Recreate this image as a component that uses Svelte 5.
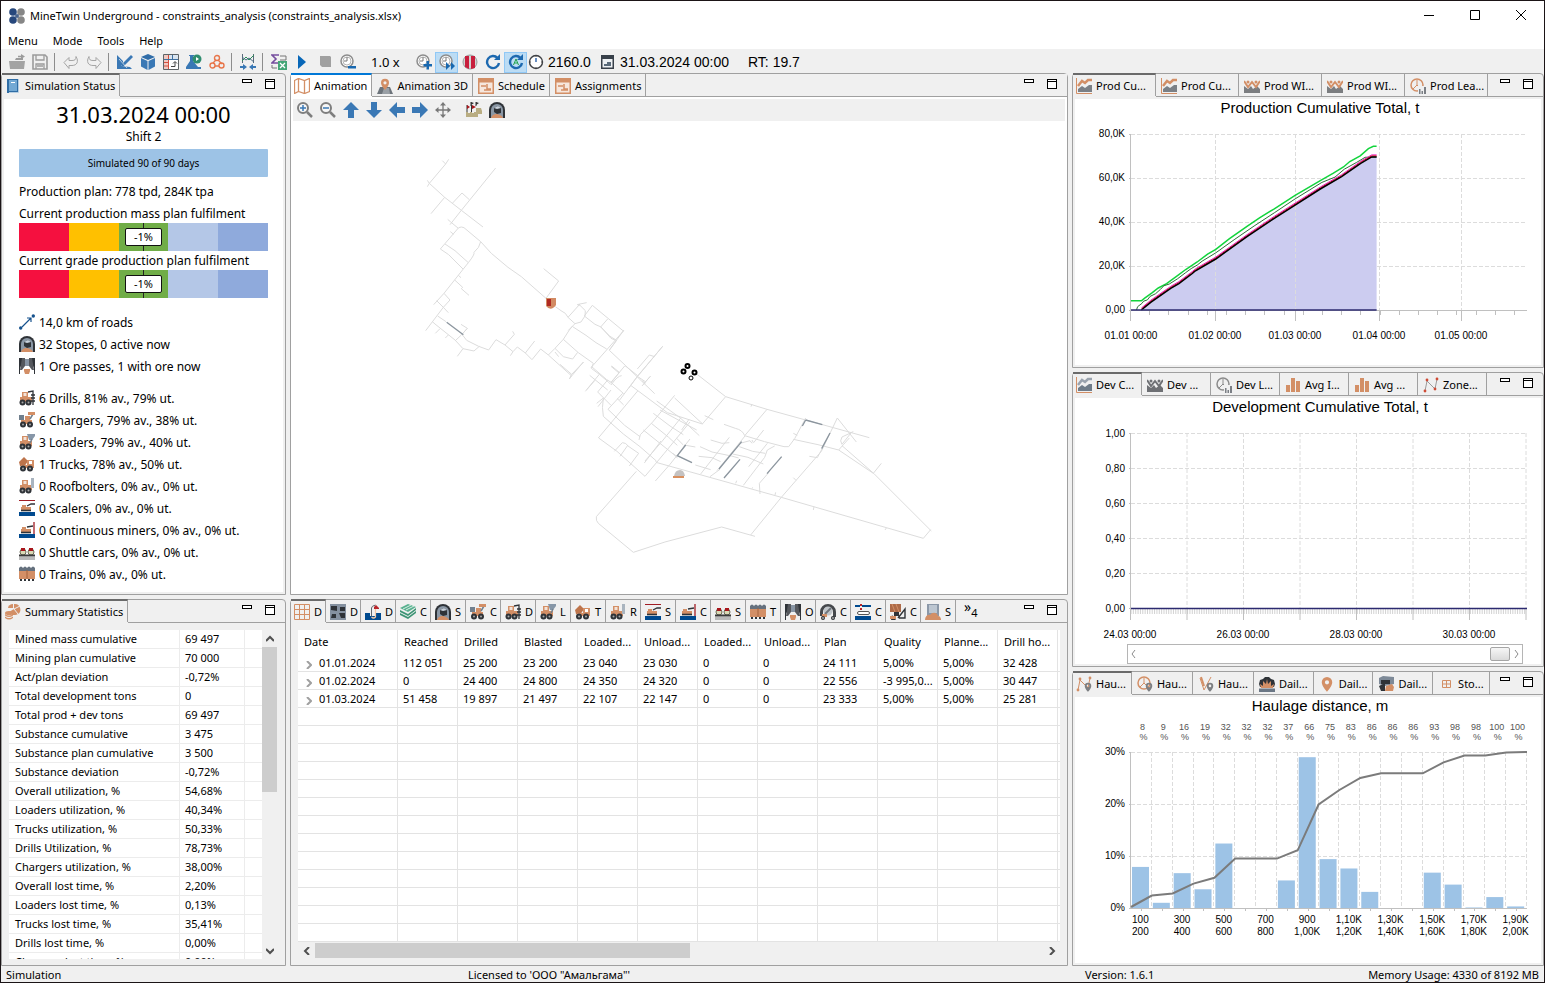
<script>
  const OR = '#d38f66';
  const DK = '#2f3338';
  const BL = '#3a78b5';
  const GR = '#8d8d8d';

  const wheel = (x, y = 12.5, r = 3) =>
    `<circle cx="${x}" cy="${y}" r="${r}" fill="${DK}"/><circle cx="${x}" cy="${y}" r="1" fill="#a9a9a9"/>`;
  const rig = `<path fill="${OR}" d="M1 7h2V2h6v5h4v5H1z"/><path fill="#f3e3d8" d="M4.500 3h3v3h-3z"/>${wheel(3.5)}${wheel(9.5)}`;
  const line = (d, c, w = 1) => `<path d="${d}" fill="none" stroke="${c}" stroke-width="${w}"/>`;
  const fill = (d, c) => `<path d="${d}" fill="${c}"/>`;
  const clock = `<circle cx="7" cy="7" r="6" fill="#fff" stroke="${GR}" stroke-width="1.500"/><circle cx="7" cy="7" r="4" fill="none" stroke="#b5b5b5"/>${line('M7 3v4h-3', '#777')}`;
  const pie = (c) => `<circle cx="7" cy="7" r="6" fill="none" stroke="${c}" stroke-width="1.500"/>${line('M7 2v5l-4 4M7 7l2 2', c)}`;
  const pin = (c, x = 8, y = 0, s = 1) =>
    `<g transform="translate(${x} ${y}) scale(${s})"><path fill="${c}" fill-rule="evenodd" d="M0 1a5 5 0 0 1 5 5c0 4-5 9-5 9s-5-5-5-9a5 5 0 0 1 5-5zm0 3a2 2 0 1 0 0 4 2 2 0 0 0 0-4z"/></g>`;
  const area = (axis, a, b) => line('M.500 0v15.500h15.500', axis) + fill('M2 11l4-3 3 2 4-3h3v7H2z', b) + line('M2 8l4-5 3 2 3-3h4', a, 2.5);
  const waves = (a, b) => fill('M0 8l4 3 3-3 2 3 4-3 3 3v4H0z', b) + line('M0 3l4 6 4-5 4 5 4-6', a, 2) + `<circle cx="4" cy="4" r="1.500" fill="${a}"/><circle cx="12" cy="4" r="1.500" fill="${a}"/>`;
  const lead = (a) => pie(a) + fill('M8 8h8v8H8z', '#f0f0f0') + fill('M9 11h1.500v5H9zM11.500 13H13v3h-1.500zM14 9h2v7h-2z', '#7b7f85');
  const bars = fill('M1 8h4v7H1zM6 1h4v14H6zM11 4h4v11h-4z', OR);
  const zone = (a, dot) => line('M2 14L4 4l8 8 2-10', a) + [[2, 14], [4, 3], [12, 12], [14, 2]].map(([x, y]) => `<circle cx="${x}" cy="${y}" r="1.400" fill="${dot}"/>`).join('');
  const arch = fill('M0 16V8a8 8 0 0 1 16 0v8z', DK) + fill('M2 16V8a6 6 0 0 1 12 0v8z', '#8a97a5') + fill('M5 6l4-2 3 2v5l-4 1-3-2z', DK) + fill('M5 6l4-2 3 2-4 1z', '#c9d2dc') + fill('M2 16c1-3 3-4 5-4s6 1 7 4z', OR);
  const lens = `<circle cx="6" cy="6" r="5" fill="#f7f7f7" stroke="#7e7e7e" stroke-width="2"/>${line('M10 10l5 5', '#7e7e7e', 2.5)}`;
  const arrow = 'M8 0l8 8h-5v8H5V8H0z';
  const turn = (deg) => `<path d="${arrow}" fill="${BL}" transform="rotate(${deg} 8 8)"/>`;
  const sheet = fill('M0 0h16v16H0z', OR) + fill('M1.500 4.500h13v10h-13z', '#f6e7dd') + line('M3 8h5M6 12h7M9 6v5h4', OR, 1.5);
  const reload = line('M12.500 4A6 6 0 1 0 14 9', '#1d69b0', 2.4) + fill('M9 6h6V0z', '#1d69b0');
  const floor = fill('M0 12h16v4H0z', '#004a8f');
  const crawler = fill('M3 5h4v2h5v3H2V7h1z', OR) + line('M2 10.500h10', DK, 1.6);

  const icons = {
    logo: [[4, 4, '#27477c'], [12, 4, '#868686'], [4, 12, '#27477c'], [12, 12, '#868686']].map(([x, y, c]) => `<circle cx="${x}" cy="${y}" r="3.800" fill="${c}"/>`).join('') + `<circle cx="8" cy="8" r="2" fill="#4b648c"/>`,
    open: fill('M1 6h5l1-2h7v2H1z', '#9b9b9b') + fill('M0 7h16l-1 8H1z', '#a3a3a3') + line('M9 2.500h4', '#9b9b9b', 1.5) + fill('M12 0l4 2.500-4 2.500z', '#9b9b9b'),
    save: line('M1 1h12l2 2v12H1z', '#9b9b9b', 1.6) + line('M4 1v5h8V1M4 15v-5h8v5M5 12h6', '#9b9b9b', 1.3),
    undo: line('M1 8.500l5-5v3h3c3 0 4-1 4-4 3 5 1 9-4 9H6v3z', '#a5a5a5'),
    redo: line('M15 8.500l-5-5v3H7c-3 0-4-1-4-4-3 5-1 9 4 9h3v3z', '#a5a5a5'),
    design: fill('M0 1l6 6v3L4 12l9 1 2 2H0z', BL) + fill('M14 1l2 2-9 9-3 1 1-3z', BL) + line('M2 5l8 9', '#f0f0f0', .7),
    cube: fill('M8 0l7 3-7 3-7-3z', '#2f6ca8') + fill('M1 4l6.500 3v9L1 12.500z', BL) + fill('M15 4L8.500 7v9l6.500-3.500z', BL),
    grid: fill('M1 1h14v14H1z', '#fff') + fill('M1 1h14v4H1z', '#d9e4ef') + fill('M1 1h4v14H1z', '#f0c9c2') + line('M5.500 0v16M1 8.500h4M1 12h4', '#d6513f') + line('M0 5.500h16M9.500 0v5', '#3f6f9f') + line('M.500.500h15v15H.500z', '#5f6467') + line('M8 12.500h4V8M10 9.500l2-2 2 2', '#444'),
    flask: fill('M3 1h5v1H7v5l5 6v2H0v-2l4-6V2H3z', BL) + fill('M6 13h9v2H6z', BL) + `<circle cx="11" cy="5" r="4.500" fill="#2f8d6f"/>` + fill('M10 3l3 2-3 2z', '#fff'),
    share: `<g fill="none" stroke="#e8764b" stroke-width="1.400"><circle cx="8" cy="4" r="2.500"/><circle cx="3.500" cy="11.500" r="2.500"/><circle cx="12.500" cy="11.500" r="2.500"/><path d="M7 6L4 9M9 6l4 4M6 12h4"/></g>`,
    graph: line('M2.500 0v9M13.500 0v9', '#5a6a7a') + line('M2 7l4-4 3 3 5-5', '#2c8d5b') + line('M2 3l4 3 3-2 5 4', '#4c6d87') + line('M0 13h3M16 13h-3', BL, 2) + fill('M3 10l4 3-4 3zM13 10l-4 3 4 3z', BL),
    sigma: line('M8 1H1l4 4-4 4h7', '#754e9e', 1.6) + line('M9 2h6v4M9 6h6', '#777') + fill('M7 7h9v9H7z', '#43a576') + line('M9 9l5 5M14 9l-5 5', '#fff', 1.3) + line('M1 11v3h5', '#777'),
    play: fill('M4 1l8 7-8 7z', '#0867b8'),
    stop: fill('M3 2h10l1 1v10H5l-2-2z', '#a0a0a0'),
    slower: clock + fill('M8 12h8v2.500H8z', '#1768b0'),
    faster: clock + fill('M10.500 7h2.500v3h3v2.500h-3v3h-2.500v-3h-3V10h3z', '#1768b0'),
    fastest: clock + fill('M7 8l4 4-4 4zM12 8l4 4-4 4z', '#1768b0'),
    pause: `<circle cx="8" cy="8" r="7" fill="#d2d2d2" stroke="#999"/>` + fill('M3 2h4v13l-4-2zM9 2h4v12l-4 1z', '#c81e3c'),
    reload,
    auto: reload + line('M5.500 11L8 5l2.500 6M6.500 9h3', '#1ea24a'),
    watch: `<circle cx="8" cy="8" r="6.500" fill="#fff" stroke="#3f4145" stroke-width="1.400"/>${line('M8 4v4', '#2a5fa8', 1.4)}<path d="M8 2v1M8 13v1M2 8h1M13 8h1" stroke="#555"/>`,
    calendar: fill('M1 1h13v14H1z', '#38404a') + fill('M2.500 5h10v8.500h-10z', '#eef1f4') + fill('M4 10h3V8h4v4H4z', '#5b6b7b'),
    book: fill('M2 1h11v14H2z', '#2f6da5') + fill('M4 2h8v11H4z', '#73a9d4') + line('M4 14.500h9.500V1', '#b7cfe2') + line('M6 4.500h4', '#fff'),
    coins: `<path fill="${OR}" d="M9 5V0a6 5.500 0 1 1-5 8z"/><path fill="${OR}" d="M8 4H3a5 4 0 0 1 5-4z"/><ellipse cx="4" cy="9" rx="4" ry="2" fill="${OR}"/><path fill="${OR}" d="M0 10q4 3 8 0v1.500q-4 3-8 0zM0 12.500q4 3 8 0V14q-4 3-8 0z"/>` + line('M9 5l6-3M9 5l4 5', '#f0f0f0'),
    map: line('M.500 2.500l4-2 6 2 5-2v13l-5 2-6-2-4 2zM4.500.500v13M10.500 2.500v13', OR, 1.3),
    pin3d: fill('M0 16l3-7h10l3 7z', '#6d747b') + fill('M5 16l2-6h5l1 6z', '#9aa0a6') + pin(OR, 8, 0, .8),
    sheet,
    zoomin: lens + line('M3 6h6M6 3v6', BL, 1.5),
    zoomout: lens + line('M3 6h6', BL, 1.5),
    up: turn(0), down: turn(180), left: turn(270), right: turn(90),
    move: line('M8 2v12M2 8h12', '#777', 1.3) + fill('M8 0l3 3.500H5zM8 16l3-3.500H5zM0 8l3.500-3v6zM16 8l-3.500-3v6z', '#777'),
    flags: fill('M0 10h2v1h2v-1h2v1h2v-1h2V6h5l1 3v3h-4v3H0z', '#b9ad82') + line('M1 3v7M5.500 3v7M5 0v4M10 0v4', '#333') + fill('M1 3l3 2-3 2zM6 3l4 2-4 2z', '#a8161c') + fill('M5 0l3 1-3 2zM10 0l3 1-3 2z', '#333'),
    arch,
    road: line('M3 13L12 4M8 4h4v4', '#16528d', 1.2) + `<circle cx="1.700" cy="14" r="1.700" fill="#16528d"/><circle cx="14.300" cy="2" r="1.700" fill="#16528d"/>`,
    orepass: fill('M0 0h3v6L1 10v6H0zM16 0h-3v6l2 4v6h1z', DK) + fill('M3 0h3v8l-3 4H1zM13 0h-3v8l3 4h2z', '#55585d') + fill('M6 1h4v7H6z', '#8794a3') + fill('M5 11h6v2l-1 3H6l-1-3z', OR),
    drill: rig + line('M9 2l5-1v14M12 5h4M12 8h4M12 11h4', DK, 1.3),
    charger: fill('M0 3h5v5H0z', '#71808e') + fill('M2 8h11v4H2z', OR) + fill('M6 4h5v4H6z', OR) + line('M11 7l3-5', '#71808e', 1.5) + fill('M9 0h7v3H9z', OR) + wheel(4) + wheel(11),
    loader: rig + fill('M8 0h8v2l-3 4h-3z', '#8797a8') + line('M11 9l2-4', '#71808e', 1.5),
    truck: fill('M0 6l5-5 4 4-4 6-4-1z', '#bd744b') + fill('M8 4h7v8H2V9h6z', OR) + fill('M10 5h3v3h-3z', '#fff') + wheel(4) + wheel(11),
    bolter: rig + line('M13.500 0v10', '#a9b4bf', 3),
    scaler: floor + line('M0 .500h16', '#a11d24') + crawler + line('M8 6l4-2h4', DK, 1.3),
    miner: floor + crawler + line('M8 5l6-1', DK, 1.3) + line('M15 0v12', '#a11d24', 1.3),
    shuttle: fill('M0 13h16v3H0z', '#b9b9b9') + `<circle cx="4" cy="8" r="3" fill="#dad9b5" stroke="#6a6a55"/><circle cx="12" cy="8" r="3" fill="#dad9b5" stroke="#6a6a55"/>` + fill('M2 4h4v3H2zM10 4h4v3h-4z', '#a8161c') + line('M0 11.500h16', '#3b3b3b', 2),
    train: fill('M0 3h16v10H0z', OR) + fill('M0 2q2-3 4 0 2-3 4 0 2-3 4 0 2-3 4 0v3H0z', '#65717e') + line('M8 4v9', '#a4623d') + fill('M1 13h2v2H1zM5 13h2v2H5zM9 13h2v2H9zM13 13h2v2h-2z', DK),
    table: line('M.500.500h15v15H.500zM5.500 0v16M10.500 0v16M0 5.500h16M0 10.500h16', OR),
    blocks: fill('M0 0h16v16H0z', '#8591a0') + fill('M1 2h6v5l-6-1zM10 3h5v4h-5zM2 10h4v4H1zM9 9h6v5h-4z', DK),
    hook: fill('M0 9h5v3h6V9h5v7H0z', '#004a8f') + line('M6.500 12V4q0-2 4-3', '#60666d') + fill('M9 3l2-2 3 3v1H9z', '#b8262b') + line('M10.500 5v8q-2 2-4 0', '#f1c7a3', 1.2),
    cash: fill('M0 4l8-4 8 3-8 5z', '#58b08f') + fill('M0 6l8 4 8-6v2l-8 6-8-4zM0 9l8 4 8-6v2l-8 6-8-4z', '#3d9475') + line('M3 5l8-4M6 6l8-4', '#d7efe5'),
    cave: fill('M0 12V8a8 8 0 0 1 16 0v5h-3V8a5 5 0 0 0-10 0v4z', '#45484c') + `<circle cx="8" cy="7" r="4.500" fill="#c1c6cb"/>` + line('M5 10l6-6', '#70767d', 2) + fill('M2 10h5v3H2z', OR) + wheel(3, 14, 2) + wheel(13, 14, 2),
    conveyor: fill('M0 1h5v2H0zM7 1h9v2H7z', '#004a8f') + fill('M0 12h16v4H0z', '#004a8f') + `<rect x="2.500" y="7.500" width="12" height="3" rx="1.500" fill="#fff" stroke="#555"/>` + fill('M5 0h2v2H5zM5 4h2v2H5z', '#b8262b'),
    crusher: fill('M0 0h11v8H0z', '#ad6b49') + line('M2 0l3 8M6 0l3 8', OR) + fill('M4 8h5v4H4zM2 11l4 5H1z', DK) + line('M8 14l7-9v9H9', DK, 1.4) + fill('M0 12h6v3H0z', OR),
    stockpile: fill('M2 0h12v12H2z', '#8b98a8') + fill('M4 1h8v8H4z', '#bcc6d1') + fill('M0 16c0-4 3-6 5-5 2-3 7-3 8 1 2 0 3 2 3 4z', OR),
    area: area(OR, OR, '#7b8086'),
    waves: waves(OR, '#7b7d80'),
    lead: lead(OR),
    areaGrey: area(OR, '#9aa3ae', '#6f7c89'),
    wavesGrey: waves('#6e7074', '#6e7074'),
    leadGrey: lead('#8b8b8b'),
    bars,
    zone: zone('#9b9b9b', '#cf4b35'),
    zonePin: zone(OR, OR) + pin('#7d7f82', 12, 6, .65),
    piePin: pie(OR) + pin('#7d7f82', 12, 6, .65),
    linePin: line('M2 2l4 12 7-13', OR) + line('M3 1l3 9', OR, 2) + pin('#7d7f82', 12, 6, .65),
    blast: fill('M1 11L0 8l1-4 3-1 2-2h4l2 2 3 1 1 4-1 3z', DK) + fill('M2 12l-1-4 3 2 0-5 3 3 1-5 1 5 3-3 0 5 3-2-1 4z', OR) + fill('M0 12.500h16V16H0z', '#6b7785'),
    pin: pin(OR, 8, 0, 1.05),
    rock: fill('M1 2l4-2 11 1v7l-9 2-6-2z', '#7e8a98') + fill('M3 4h9v4H3z', DK) + fill('M1 10l6-3v8l-4 0z', DK) + fill('M7 15l1-5 6-2 2 3-1 4z', OR),
    stopes: line('M4.500 4.500h8v7h-8zM8.500 4v8M4 8h9', OR)
  };

  const tools = [
    ['open', 'Open'], ['save', 'Save'], null, ['undo', 'Undo'], ['redo', 'Redo'], null,
    ['design', 'Design'], ['cube', 'Model'], ['grid', 'Input tables'], ['flask', 'Experiment'], ['share', 'Network'], null,
    ['graph', 'Compare'], null, ['sigma', 'Export'], ['play', 'Run'], ['stop', 'Stop'], ['slower', 'Slower']
  ];
  const speedTools = [['faster', 'Faster'], ['fastest', 'Maximum speed', true], ['pause', 'Pause'], ['reload', 'Refresh'], ['auto', 'Auto refresh', true]];
  const mapTools = [['zoomin', 'Zoom in'], ['zoomout', 'Zoom out'], ['up', 'Pan up'], ['down', 'Pan down'], ['left', 'Pan left'], ['right', 'Pan right'], ['move', 'Fit'], null, ['flags', 'Show equipment'], ['arch', 'Show stopes']];

  const objects = [['road', '14,0 km of roads'], ['arch', '32 Stopes, 0 active now'], ['orepass', '1 Ore passes, 1 with ore now']];
  const machines = [
    ['drill', '6 Drills, 81% av., 79% ut.'],
    ['charger', '6 Chargers, 79% av., 38% ut.'],
    ['loader', '3 Loaders, 79% av., 40% ut.'],
    ['truck', '1 Trucks, 78% av., 50% ut.'],
    ['bolter', '0 Roofbolters, 0% av., 0% ut.'],
    ['scaler', '0 Scalers, 0% av., 0% ut.'],
    ['miner', '0 Continuous miners, 0% av., 0% ut.'],
    ['shuttle', '0 Shuttle cars, 0% av., 0% ut.'],
    ['train', '0 Trains, 0% av., 0% ut.']
  ];

  const summary = [
    ['Mined mass cumulative', '69 497'], ['Mining plan cumulative', '70 000'], ['Act/plan deviation', '-0,72%'],
    ['Total development tons', '0'], ['Total prod + dev tons', '69 497'], ['Substance cumulative', '3 475'],
    ['Substance plan cumulative', '3 500'], ['Substance deviation', '-0,72%'], ['Overall utilization, %', '54,68%'],
    ['Loaders utilization, %', '40,34%'], ['Trucks utilization, %', '50,33%'], ['Drills Utilization, %', '78,73%'],
    ['Chargers utilization, %', '38,00%'], ['Overall lost time, %', '2,20%'], ['Loaders lost time, %', '0,13%'],
    ['Trucks lost time, %', '35,41%'], ['Drills lost time, %', '0,00%'], ['Chargers lost time, %', '0,00%']
  ];

  const columns = ['Date', 'Reached', 'Drilled', 'Blasted', 'Loaded...', 'Unload...', 'Loaded...', 'Unload...', 'Plan', 'Quality', 'Planne...', 'Drill ho...'];
  const rows = [
    ['01.01.2024', '112 051', '25 200', '23 200', '23 040', '23 030', '0', '0', '24 111', '5,00%', '5,00%', '32 428'],
    ['01.02.2024', '0', '24 400', '24 800', '24 350', '24 320', '0', '0', '22 556', '-3 995,0...', '5,00%', '30 447'],
    ['01.03.2024', '51 458', '19 897', '21 497', '22 107', '22 147', '0', '0', '23 333', '5,00%', '5,00%', '25 281']
  ];
  const blankRows = Array.from({ length: 13 });

  const detailTabs = [
    ['table', 'D'], ['blocks', 'D'], ['hook', 'D'], ['cash', 'C'], ['arch', 'S'], ['charger', 'C'], ['drill', 'D'], ['loader', 'L'],
    ['truck', 'T'], ['bolter', 'R'], ['scaler', 'S'], ['miner', 'C'], ['shuttle', 'S'], ['train', 'T'], ['orepass', 'O'],
    ['cave', 'C'], ['conveyor', 'C'], ['crusher', 'C'], ['stockpile', 'S']
  ];

  // Chart geometry shared by all three charts.
  const X0 = 56;
  const X1 = 452;
  const Y0 = 211;

  // Production: x in days since 01.01, y in thousand tonnes.
  const px = (d) => X0 + d * 2.735;
  const py = (k) => Y0 - k * 2.2;
  const poly = (list, dy = 0) => list.map(([d, k]) => `${px(d).toFixed(1)},${(py(k) + dy).toFixed(1)}`).join(' ');
  const mined = [[0, 0], [3.8, 0], [7.2, 3.5], [14.5, 9.8], [17.5, 12], [22.4, 16.6], [23.6, 17.8], [31, 23.2], [42.4, 33.3], [52.4, 41.7], [60, 47.7], [69.2, 55], [77, 60.6], [84, 66.7], [88, 69.6], [89.8, 69.6]];
  const blasted = [[2, 0], [2.4, 1.5], [4, 3], [4.6, 4], [6, 4.6], [7, 6.2], [9, 7.4], [10.8, 9.4], [12, 11], [14, 11.8], [17, 14.2], [20, 17], [22, 18.8], [24.2, 20.4], [26, 22.2], [31, 26], [38, 32.2], [45, 38.2], [52.4, 44.2], [60, 50.5], [69.8, 58], [74.6, 60.4], [78, 64], [82.5, 67.1], [85.6, 69.4], [89.8, 69.6]];
  const drilled = [[0, 4.2], [3.8, 4.2], [5, 5.4], [7.8, 7.9], [10, 10], [13, 12], [17, 15.6], [20, 18.4], [24.2, 21.8], [28, 25.4], [31, 27.6], [36, 32.4], [42.4, 38], [47, 41.9], [52.4, 46], [60, 52.1], [69.2, 58.8], [74, 62.2], [77.7, 65], [80, 67.5], [83.8, 70.1], [86.8, 73.3], [88.6, 74.4], [89.8, 74.4]];
  const months = [[0, '01.01 00:00'], [31, '01.02 00:00'], [60, '01.03 00:00'], [91, '01.04 00:00'], [121, '01.05 00:00']];

  // Haulage: share per 100 m bin and the cumulative curve.
  const step = (X1 - X0) / 19;
  const share = [7.9, 1, 6.7, 3.6, 12.4, 0, 0, 5.3, 29, 9.4, 7.6, 3.1, 0, 0, 6.8, 4.5, 0.1, 2.1, 0.3];
  const cumulative = [8, 9, 16, 19, 32, 32, 32, 37, 66, 75, 83, 86, 86, 86, 93, 98, 98, 100, 100];
  const curve = [0.2, 2.4, 2.8, 4.7, 5.8, 9.5, 9.5, 9.5, 11.1, 19.9, 22.7, 25, 25.9, 25.9, 25.9, 28, 29.3, 29.3, 29.9, 30];
  const curvePoints = curve.map((v, i) => `${(X0 + i * step).toFixed(1)},${(Y0 - v * 5.2).toFixed(1)}`).join(' ');
  const bins = [['100', '200'], ['300', '400'], ['500', '600'], ['700', '800'], ['900', '1,00K'], ['1,10K', '1,20K'], ['1,30K', '1,40K'], ['1,50K', '1,60K'], ['1,70K', '1,80K'], ['1,90K', '2,00K']];
</script>

{#snippet icon(name)}
  <svg class="icon" viewBox="0 0 16 16" aria-hidden="true">{@html icons[name]}</svg>
{/snippet}

{#snippet tool([name, label, pressed])}
  <button class="tool" class:pressed aria-label={label} title={label}>{@render icon(name)}</button>
{/snippet}

{#snippet head(tabs, size = '', more = '')}
  <header class="head {size}">
    <div class="tabs" role="tablist">
      {#each tabs as [name, label], i}
        <button class="tab" class:active={i === 0} role="tab" aria-selected={i === 0}>{@render icon(name)}<span>{label}</span></button>
      {/each}
      {#if more}<button class="more" aria-label="More tabs">»<sub>{more}</sub></button>{/if}
    </div>
    <button class="win" aria-label="Minimize"><i class="min"></i></button>
    <button class="win" aria-label="Maximize"><i class="max"></i></button>
  </header>
{/snippet}

{#snippet gauge(label, value)}
  <p class="line">{label}</p>
  <div class="gauge">
    <i></i><i></i><i></i><i></i><i></i>
    <span class="mark"><b>{value}</b></span>
  </div>
{/snippet}

<div class="app">
  <header class="title">
    {@render icon('logo')}
    <h1>MineTwin Underground - constraints_analysis (constraints_analysis.xlsx)</h1>
    <button aria-label="Minimize window"><svg viewBox="0 0 10 10"><path d="M0 5.500h10" /></svg></button>
    <button aria-label="Maximize window"><svg viewBox="0 0 10 10"><path d="M.500.500h9v9h-9z" /></svg></button>
    <button aria-label="Close window"><svg viewBox="0 0 10 10"><path d="M0 0l10 10M10 0L0 10" /></svg></button>
  </header>

  <nav class="menu">
    {#each ['Menu', 'Mode', 'Tools', 'Help'] as item}<button>{item}</button>{/each}
  </nav>

  <div class="toolbar" role="toolbar" aria-label="Simulation">
    {#each tools as t}
      {#if t}{@render tool(t)}{:else}<span class="sep"></span>{/if}
    {/each}
    <span class="speed">1.0 x</span>
    {#each speedTools as t}{@render tool(t)}{/each}
    <span class="read clock">{@render icon('watch')}<span>2160.0</span></span>
    <span class="read date">{@render icon('calendar')}<span>31.03.2024 00:00</span></span>
    <span class="read">RT: 19.7</span>
  </div>

  <main>
    <div class="col left">
      <section class="panel">
        {@render head([['book', 'Simulation Status']])}
        <div class="body status">
          <h2>31.03.2024 00:00</h2>
          <p class="shift">Shift 2</p>
          <div class="progress">Simulated 90 of 90 days</div>
          <p class="line plan">Production plan: 778 tpd, 284K tpa</p>
          {@render gauge('Current production mass plan fulfilment', '-1%')}
          {@render gauge('Current grade production plan fulfilment', '-1%')}
          {#each [objects, machines] as group}
            <ul>
              {#each group as [name, text]}<li>{@render icon(name)}<span>{text}</span></li>{/each}
            </ul>
          {/each}
        </div>
      </section>

      <section class="panel">
        {@render head([['coins', 'Summary Statistics']])}
        <div class="inset stats">
          <div class="clip">
            <table class="summary">
              <tbody>
                {#each summary as [name, value]}<tr><th scope="row">{name}</th><td>{value}</td><td></td></tr>{/each}
              </tbody>
            </table>
          </div>
          <div class="vscroll">
            <button aria-label="Scroll up"><svg viewBox="0 0 8 8"><path d="M0 6l4-4 4 4" /></svg></button>
            <div class="track"><i></i></div>
            <button aria-label="Scroll down"><svg viewBox="0 0 8 8"><path d="M0 2l4 4 4-4" /></svg></button>
          </div>
        </div>
      </section>
    </div>

    <div class="col middle">
      <section class="panel focus">
        {@render head([['map', 'Animation'], ['pin3d', 'Animation 3D'], ['sheet', 'Schedule'], ['sheet', 'Assignments']])}
        <div class="body">
          <div class="maptools" role="toolbar" aria-label="Map">
            {#each mapTools as t}
              {#if t}{@render tool(t)}{:else}<span class="sep blank"></span>{/if}
            {/each}
          </div>
          <svg class="map" viewBox="293 121 772 471" role="img" aria-label="Mine plan">
            <g class="roads" transform="translate(400 140) scale(.33333)">
              <path d="M127 62l10 10 9-14M137 72L88 130M82 121l6 9-6 10M88 130l46 42-41 49M134 172l50 39 65 50M287 84L184 211l-34 43M208 179l-22-20-28 30M143 238l8 7 24 20" />
              <path d="M151 275l10 8M121 327l55-64q8-4 16 0l50 42 32 35 50 42 40 28 74 65 38-52-45-37M121 327l25 17 43 43M135 312l30 20 40 36M242 305q-3 18-20 32 3 6-17 31l-73 92-31 34M175 406l8 7M164 420l24 22-4 4 23 20M132 460l18 20-20 22 15 16M110 482l20 20-53 70M97 545l8 7 60 48 24 26 33 7 16-14M120 566l-14 14M145 585l-9 9M189 626l-17 23M113 528l25 17M186 583l16-18-19-12M202 565l-18 20-18 17M186 583l14 18 36 18 30 11 22-31 27 16 28-32-5-9M315 615l24 20 13-14 24 18 28-36M339 635l-8 12M376 639l20 20 26-32 23 18M445 645l20-20 25-27 18-28 10-12M445 645l70 63 35-42M515 708l-6 8M465 625l25 25 28 7 15-20M490 598l45 40 45 32M465 636l11 14" />
              <path d="M466 500l20 14 10 6 8 12 21 19 18-5 12-18 1-16-16-16-8-2 8-2 20-4M504 532l36-40M525 551l-20 20M518 560l40 26 30 22 32 19M553 528l24-32 93 77-97 110M553 528l32 25 18 8 16 18 14 16 14 6M623 537l-21 24 28 28 20 12-22 30 48 45 88 85M580 670l-6 15 24 18 26 22 8 8M635 678l24 20M598 703l-38 46M788 619l-76 90-26 36M712 687l36-42 16 5M712 709l24 16-5 9M752 708l-18 20M665 707q-12 0-32 28" />
            </g>
            <g class="roads" transform="translate(560 330) scale(.33333)">
              <path d="M192 0l-44 60M0 103l35 30 36-37M35 133l-7 14M95 110l44 38 16 10M153 109l24 20-24 30M89 136l54 44M195 107l-42 50 38 34M195 107l38 30M308 49L232 140l-20 26-33 44M270 140l-24 28M246 152l10 8M104 152l-28 32M143 150l-30 36 40 40M153 180l-39 50M233 183L115 324M116 324l55 40 84 75 57-68 78-95M110 220l20-16q-5 30 0 55l60 53 50 38 48 42 0 4M188 190l-44 48 50 48 46 34M212 166l110 82 105 34 70-82M428 282l-84-78M344 196l-66 80-37 38-4 16M290 213l70 50 58 54M300 240l110 60M280 250l50 38 40 26M274 280l52 42 26 24M250 300l50 40 42 34 10 10M363 263l-56 70-52 60M387 268l-22 32M303 333l-50 66M171 205l20 20M163 364l24-26q12 0 17 10l32 22-28 38M204 345l-24 34M434 257l26 12M390 327l-60 76-44 50" />
              <path d="M410 132l87 68 124 38 116 32 191 53M573 230l3-8M621 238l-66 78M492 283l34 12q22 5 28 22l60 18 58 15h14l18-24 33-62M700 310l12 6M452 330l34 10 22-2M508 322l-86 110M420 350l36 16 58 12 22 6M416 379l40 4 26 12M406 405l46 14M555 318l-24 30-60 74M540 340l30-8 6 8M611 300l-30 38M538 350l40 14 38 6M518 372l46 10 46 20M576 330l4 8M550 466l64-84 8-22 22-12M622 340l-56 70M700 328l74 16 62 16 104 70M836 360q14-16 32-36M748 379l24 4 14-26M664 502l120-138 48-100 57 72M876 305l-30 38q-8-10 0-22l34-16M846 347l96 84 172 172M1090 625l22-26M940 430l24-30M288 397l376 105 426 123M664 502l-92 113M585 619l-100-28-170 45-95 31L115 580q-8-8-6-20l120-136M600 492l-2-32 28-32M527 460l3-8M645 495l2-8M700 443l8 8M576 476l2-4M760 540l2-10M975 600l4-6M450 440l30-22M372 345l34 6M350 325l20 20M352 380l-14-10" />
            </g>
            <g class="working" transform="translate(560 330) scale(.33333)">
              <path d="M377 345l-25 32 44 21M545 335l-68 82M540 388l-48 56M665 380l-44 51M737 270l-10 18M737 270l50 14M810 309l-25 47" />
              <path d="M-340 -23l26 19 24 18" />
            </g>
            <path class="shaft" d="M546 298h10v7q-5 7-10 1z" /><path class="ore" d="M547 299h4v7h-4z" />
            <path class="portal" d="M674 476q1-6 6-6 4 0 5 6z" /><path class="ramp" d="M673 476h11v2h-11z" />
            <circle class="dot" cx="687.5" cy="366" r="2" /><circle class="dot" cx="683.5" cy="371.500" r="2" />
            <circle class="dot" cx="694.5" cy="372.500" r="2" /><circle class="dot thin" cx="691" cy="378" r="2" />
          </svg>
        </div>
      </section>

      <section class="panel">
        {@render head(detailTabs, 'narrow', '4')}
        <div class="inset detail">
          <div class="clip">
            <table class="periods">
              <thead>
                <tr>{#each columns as c, i}<th scope="col" class:first={i === 0}>{c}</th>{/each}<th></th></tr>
              </thead>
              <tbody>
                {#each rows as r}
                  <tr>
                    {#each r as c, i}
                      <td>{#if i === 0}<svg class="chev" viewBox="0 0 6 8"><path d="M1 0l4 4-4 4" /></svg>{/if}{c}</td>
                    {/each}
                    <td></td>
                  </tr>
                {/each}
                {#each blankRows as _}
                  <tr>{#each columns as _c}<td></td>{/each}<td></td></tr>
                {/each}
              </tbody>
            </table>
          </div>
          <div class="hscroll">
            <button aria-label="Scroll left"><svg viewBox="0 0 8 8"><path d="M6 0L2 4l4 4" /></svg></button>
            <div class="track"><i></i></div>
            <button aria-label="Scroll right"><svg viewBox="0 0 8 8"><path d="M2 0l4 4-4 4" /></svg></button>
          </div>
        </div>
      </section>
    </div>

    <div class="col right">
      <section class="panel">
        {@render head([['area', 'Prod Cu...'], ['area', 'Prod Cu...'], ['waves', 'Prod WI...'], ['waves', 'Prod WI...'], ['lead', 'Prod Lea...']], 'wide')}
        <div class="body">
          <svg class="chart" viewBox="0 0 466 266" role="img" aria-label="Production Cumulative Total">
            <text class="caption" x="245" y="14">Production Cumulative Total, t</text>
            {#each [80, 60, 40, 20, 0] as k}
              {#if k}<path class="grid" d="M{X0} {py(k) + 0.5}H{X1}" />{/if}
              <path class="axis" d="M{X0 - 2} {py(k) + 0.5}h2" />
              <text class="y" x="50" y={py(k) + 3}>{k ? `${k},0K` : '0,00'}</text>
            {/each}
            <polygon class="fill" points="{poly(mined)} {px(89.8)},{Y0} {X0},{Y0}" />
            {#each months as [d, label]}
              {#if d}<path class="grid" d="M{Math.floor(px(d)) + 0.5} 35V{Y0}" />{/if}
              <path class="axis" d="M{d ? Math.floor(px(d)) + 0.5 : X0 - 0.5} {Y0}v11" />
              <text class="x" x={Math.floor(px(d))} y="240">{label}</text>
            {/each}
            {#each Array.from({ length: 20 }) as _, i}<path class="axis" d="M{Math.round(X0 + 19.2 * (i + 1)) - 0.5} {Y0}v5" />{/each}
            <path class="axis" d="M{X0 - 0.5} 35V{Y0 + 0.5}H{X1}" />
            <polyline class="drilled" points={poly(drilled)} />
            <polyline class="blasted" points={poly(blasted)} />
            <polyline class="hauled" points={poly(mined.slice(1), -2)} />
            <polyline class="loaded" points={poly(mined.slice(1), -1)} />
            <polyline class="mined" points={poly(mined.slice(1))} />
            <path class="base" d="M{X0} {Y0}H{px(89.8)}" />
          </svg>
        </div>
      </section>

      <section class="panel">
        {@render head([['areaGrey', 'Dev C...'], ['wavesGrey', 'Dev ...'], ['leadGrey', 'Dev L...'], ['bars', 'Avg I...'], ['bars', 'Avg ...'], ['zone', 'Zone...']], 'medium')}
        <div class="body">
          <svg class="chart" viewBox="0 0 466 246" role="img" aria-label="Development Cumulative Total">
            <text class="caption" x="245" y="14">Development Cumulative Total, t</text>
            {#each ['0,00', '0,20', '0,40', '0,60', '0,80', '1,00'] as label, i}
              {#if i}<path class="grid" d="M{X0} {Y0 - i * 35 - 0.5}H{X1}" />{/if}
              <path class="axis" d="M{X0 - 2} {Y0 - i * 35 - 0.5}h2" />
              <text class="y" x="50" y={Y0 - i * 35 + 3}>{label}</text>
            {/each}
            {#each Array.from({ length: 168 }) as _, i}<path class="axis tick" d="M{X0 + i * 2.357} {Y0}v5" />{/each}
            {#each ['24.03 00:00', '', '26.03 00:00', '', '28.03 00:00', '', '30.03 00:00', ''] as label, i}
              {#if i}<path class="grid" d="M{X0 + i * 56.5 - 0.5} 35V{Y0}" />{/if}
              <path class="axis" d="M{X0 - 0.5 + i * 56.5} {Y0}v11" />
              <text class="x" x={X0 - 1 + i * 56.5} y="240">{label}</text>
            {/each}
            <path class="axis" d="M{X0 - 0.5} 35V{Y0}" />
            <path class="base" d="M{X0} {Y0 - 0.5}H{X1}" />
          </svg>
          <div class="range">
            <button aria-label="Earlier"><svg viewBox="0 0 8 8"><path d="M5 0L2 4l3 4" /></svg></button>
            <div class="track"><i></i></div>
            <button aria-label="Later"><svg viewBox="0 0 8 8"><path d="M3 0l3 4-3 4" /></svg></button>
          </div>
        </div>
      </section>

      <section class="panel">
        {@render head([['zonePin', 'Hau...'], ['piePin', 'Hau...'], ['linePin', 'Hau...'], ['blast', 'Dail...'], ['pin', 'Dail...'], ['rock', 'Dail...'], ['stopes', 'Sto...']])}
        <div class="body">
          <svg class="chart" viewBox="0 0 466 266" role="img" aria-label="Haulage distance">
            <text class="caption" x="245" y="14">Haulage distance, m</text>
            {#each [30, 20, 10, 0] as v}
              {#if v}<path class="grid" d="M{X0} {Y0 - v * 5.2 + 0.5}H{X1}" />{/if}
              <path class="axis" d="M{X0 - 2} {Y0 - v * 5.2 + 0.5}h2" />
              <text class="y" x="50" y={Y0 - v * 5.2 + 3}>{v}%</text>
            {/each}
            {#each share as v, i}
              <path class="grid" d="M{Math.round(X0 + (i + 1) * step) - 0.5} 55V{Y0}" />
              <rect class="bar" x={X0 + i * step + 1} y={Y0 - v * 5.2} width="17" height={v * 5.2} />
              <path class="axis" d="M{Math.floor(X0 + (i + 0.5) * step) + 0.5} {Y0}v3" />
              <text class="pct" x={X0 + (i + 0.5) * step + 1} y="33">{cumulative[i]}</text>
              <text class="pct" x={X0 + (i + 0.5) * step + 2} y="43">%</text>
            {/each}
            <path class="axis" d="M{X0 - 0.5} 55V{Y0 + 0.5}H{X1}" />
            <polyline class="curve" points={curvePoints} />
            {#each bins as [from, to], i}
              <text class="x" x={X0 + (i * 2 + 0.5) * step - 1} y="226">{from}</text>
              <text class="x" x={X0 + (i * 2 + 0.5) * step - 1} y="238">{to}</text>
            {/each}
          </svg>
        </div>
      </section>
    </div>
  </main>

  <footer>
    <span>Simulation</span>
    <span>Licensed to 'ООО "Амальгама"'</span>
    <span>Version: 1.6.1</span>
    <span>Memory Usage: 4330 of 8192 MB</span>
  </footer>
</div>

<style>
  :global(body) {
    background: #f0f0f0;
  }
  .app {
    display: flex;
    flex-direction: column;
    box-sizing: border-box;
    height: 100vh;
    border: 1px solid #1b1416;
    background: #f0f0f0;
    color: #000;
    font-family: 'Noto Sans', 'Open Sans', sans-serif;
    font-size: 11px;
    line-height: 16px;
    overflow: hidden;
  }
  h1, h2, p, ul { margin: 0; padding: 0; font-weight: 400; }
  h1 { font-size: inherit; }
  button {
    margin: 0;
    padding: 0;
    border: 0;
    background: none;
    color: inherit;
    font: inherit;
  }
  .icon { flex: none; width: 16px; height: 16px; }

  .title {
    display: flex;
    align-items: center;
    height: 29px;
    padding-left: 8px;
    background: #fff;
  }
  .title h1 { flex: 1; margin-left: 5px; }
  .title button { width: 46px; height: 29px; }
  .title button svg { width: 10px; height: 10px; fill: none; stroke: #000; overflow: visible; }

  .menu {
    display: flex;
    gap: 15px;
    height: 19px;
    padding-left: 7px;
    background: #fff;
  }
  .menu button { line-height: 22px; }

  .toolbar {
    display: flex;
    align-items: center;
    box-sizing: border-box;
    height: 24px;
    padding: 2px 0 0 4px;
  }
  .tool {
    display: grid;
    place-items: center;
    box-sizing: border-box;
    width: 23px;
    height: 21px;
    border: 1px solid transparent;
  }
  .pressed { border-color: #90c8f6; background: #bcdcf4; }
  .sep { width: 1px; height: 18px; margin: 0 4px 0 3px; background: #8d8d8d; }
  .blank { background: none; }
  .speed { box-sizing: border-box; width: 53px; padding-left: 12px; font-size: 13px; white-space: nowrap; }
  .read {
    display: flex;
    align-items: center;
    gap: 4px;
    font-family: 'Liberation Sans', Arial, sans-serif;
    font-size: 14px;
    white-space: nowrap;
  }
  .clock { width: 72px; padding-left: 1px; }
  .date { width: 131px; margin-right: 17px; }
  .date span { overflow: hidden; }

  main {
    flex: 1;
    display: grid;
    grid-template-columns: 285fr 778fr 472fr;
    gap: 4px;
    min-height: 0;
  }
  .col { display: grid; gap: 4px; min-width: 0; min-height: 0; }
  .left, .middle { grid-template-rows: 522fr 367fr; }
  .right { grid-template-rows: repeat(3, 1fr); }

  .panel {
    display: flex;
    flex-direction: column;
    min-width: 0;
    min-height: 0;
    border: 1px solid #a0a0a0;
    border-radius: 4px 4px 0 0;
  }
  .head {
    display: flex;
    flex: none;
    height: 22px;
    padding-right: 4px;
    border-bottom: 1px solid #a0a0a0;
  }
  .tabs { display: flex; flex: 1; min-width: 0; }
  .tab {
    display: flex;
    align-items: center;
    gap: 4px;
    box-sizing: border-box;
    height: 22px;
    padding: 1px 4px 0 5px;
    border-right: 1px solid #a0a0a0;
    white-space: nowrap;
  }
  .right .tab { padding-right: 5px; }
  .narrow .tab { width: 35px; padding: 1px 0 0 4px; }
  .wide .tab { width: 83px; }
  .medium .tab { width: 69px; }
  .tab.active {
    height: 23px;
    margin-top: -1px;
    padding-top: 0;
    padding-left: 3px;
    border-top: 2px solid #6a6a6a;
    background: #f0f0f0;
    box-shadow: 0 1px #f0f0f0;
  }
  .focus .tab.active { border-top-color: #0078d7; background: #fff; box-shadow: 0 1px #fff; }
  .more { display: flex; padding-left: 8px; font-size: 14px; line-height: 14px; }
  .more sub { padding-top: 6px; font-size: 11px; line-height: 14px; }
  .win { display: grid; justify-items: center; align-items: start; width: 23px; height: 20px; }
  .min { box-sizing: border-box; width: 10px; height: 4px; margin-top: 5px; border: 1px solid #000; background: #fff; }
  .max { box-sizing: border-box; width: 10px; height: 10px; margin-top: 5px; border: 1px solid #000; border-top-width: 3px; border-top-style: double; background: #fff; }

  .body { display: flex; flex-direction: column; flex: 1; min-height: 0; margin: 2px; background: #fff; }
  .inset { display: flex; flex: 1; min-height: 0; padding: 7px 7px 6px; }
  .focus { background: #fff; }
  .focus .head { background: #f0f0f0; }

  .status { padding: 0 15px; font-size: 12px; line-height: 18px; }
  .status h2 { margin-top: 2px; font-size: 22px; line-height: 27px; text-align: center; }
  .shift { text-align: center; }
  .progress {
    margin: 3px 0 5px;
    border-radius: 1px;
    background: #9dc3e6;
    font-size: 10px;
    line-height: 28px;
    text-align: center;
  }
  .plan { margin-bottom: 3px; }
  .line { line-height: 19px; white-space: nowrap; }
  .gauge { display: grid; grid-template-columns: repeat(5, 1fr); position: relative; height: 28px; }
  .gauge i:nth-child(1) { background: #f5103f; }
  .gauge i:nth-child(2) { background: #ffc000; }
  .gauge i:nth-child(3) { background: #70ad47; }
  .gauge i:nth-child(4) { background: #b4c7e7; }
  .gauge i:nth-child(5) { background: #8faadc; }
  .mark {
    display: flex;
    align-items: center;
    justify-content: center;
    position: absolute;
    inset: 0;
    background: linear-gradient(#222, #222) center / 1px 100% no-repeat;
  }
  .mark b {
    box-sizing: border-box;
    width: 37px;
    border: 1px solid #111;
    border-radius: 2px;
    background: #fff;
    font-size: 11px;
    font-weight: 400;
    line-height: 16px;
    text-align: center;
  }
  .status ul { margin-top: 13px; list-style: none; }
  .status ul + ul { margin-top: 10px; }
  .status li { display: flex; align-items: center; gap: 4px; height: 22px; white-space: nowrap; }
  .status li span { padding-top: 2px; }

  .clip { flex: 1; min-width: 0; overflow: hidden; background: #fff; }
  table { width: 100%; border-collapse: separate; border-spacing: 0; table-layout: fixed; }
  th, td {
    box-sizing: border-box;
    padding: 0;
    overflow: hidden;
    border-right: 1px solid #e3e3e3;
    border-bottom: 1px solid #e3e3e3;
    font-weight: 400;
    text-align: left;
    white-space: nowrap;
  }
  .summary :is(th, td) { height: 19px; padding-left: 5px; line-height: 18px; border-color: #ececec; }
  .summary th { width: 171px; padding-left: 6px; }
  .summary td:nth-child(2) { width: 65px; }
  .summary td:last-child { border-right: 0; }
  .periods th { width: 60px; height: 24px; padding-left: 6px; border-bottom: 0; }
  .periods .first { width: 100px; }
  .periods td { height: 18px; padding-left: 5px; line-height: 17px; }
  .periods td:first-child { padding-left: 8px; }
  .periods :is(th, td):last-child { width: auto; padding: 0; border-right: 0; }
  .chev { width: 6px; height: 8px; margin-right: 7px; vertical-align: -2px; fill: none; stroke: #a0a0a0; stroke-width: 2; }

  .vscroll, .hscroll { display: flex; flex: none; }
  .vscroll { flex-direction: column; width: 16px; }
  .hscroll { height: 16px; padding-top: 1px; }
  .detail { flex-direction: column; }
  .vscroll button { height: 17px; }
  .hscroll button { width: 17px; }
  .track { flex: 1; }
  .track i { display: block; background: #cdcdcd; }
  .vscroll .track i { width: 15px; height: 49%; }
  .hscroll .track i { width: 375px; height: 15px; }
  .vscroll svg, .hscroll svg { width: 8px; height: 8px; fill: none; stroke: #505050; stroke-width: 2; }
  .vscroll button, .hscroll button, .range button { display: grid; place-items: center; }

  .maptools { display: flex; align-items: center; height: 22px; background: #f0f0f0; }
  .map { flex: 1; width: 100%; min-height: 0; fill: none; }
  .roads { stroke: #dcdcdc; stroke-width: 3; }
  .working { stroke: #8b959e; stroke-width: 4; }
  .shaft { fill: #d28a62; }
  .ore { fill: #b02a22; }
  .portal { fill: #c4c2c2; }
  .ramp { fill: #d9905f; }
  .dot { fill: #fff; stroke: #000; stroke-width: 2; }
  .thin { stroke-width: 1; }

  .chart { flex: 1; width: 100%; min-height: 0; font-family: 'Liberation Sans', Arial, sans-serif; font-size: 10px; }
  .caption { font-size: 15px; text-anchor: middle; }
  .y { text-anchor: end; }
  .x, .pct { text-anchor: middle; }
  .pct { font-size: 9px; fill: #555; }
  .grid { fill: none; stroke: #dcdcdc; stroke-dasharray: 4 2; }
  .axis { fill: none; stroke: #c0c0c0; }
  .tick { stroke: #d2d2d2; }
  .fill { fill: #ccccf0; }
  polyline { fill: none; }
  .drilled { stroke: #12d43c; stroke-width: 1.5; }
  .blasted { stroke: #2c6e38; }
  .hauled { stroke: #e020c0; }
  .loaded { stroke: #e00020; }
  .mined { stroke: #000; stroke-width: 1.5; }
  .base { stroke: #2c2a70; stroke-width: 1.5; }
  .bar { fill: #9dc3e6; }
  .curve { stroke: #7b7b7b; stroke-width: 2; }

  .range {
    display: flex;
    align-items: center;
    box-sizing: border-box;
    height: 20px;
    margin: 0 18px 0 52px;
    border: 1px solid #b5b5b5;
  }
  .range button { width: 12px; }
  .range svg { width: 8px; height: 8px; fill: none; stroke: #8a8a8a; }
  .range .track i {
    box-sizing: border-box;
    width: 20px;
    height: 14px;
    margin-left: auto;
    border: 1px solid #a5a5a5;
    border-radius: 2px;
    background: linear-gradient(#f6f6f6, #dadada);
  }

  footer {
    display: grid;
    grid-template-columns: 467fr 617fr 229fr 230fr;
    flex: none;
    height: 16px;
    line-height: 18px;
    white-space: nowrap;
  }
  footer span:first-child { padding-left: 5px; }
  footer span:last-child { padding-right: 5px; text-align: right; }
</style>
